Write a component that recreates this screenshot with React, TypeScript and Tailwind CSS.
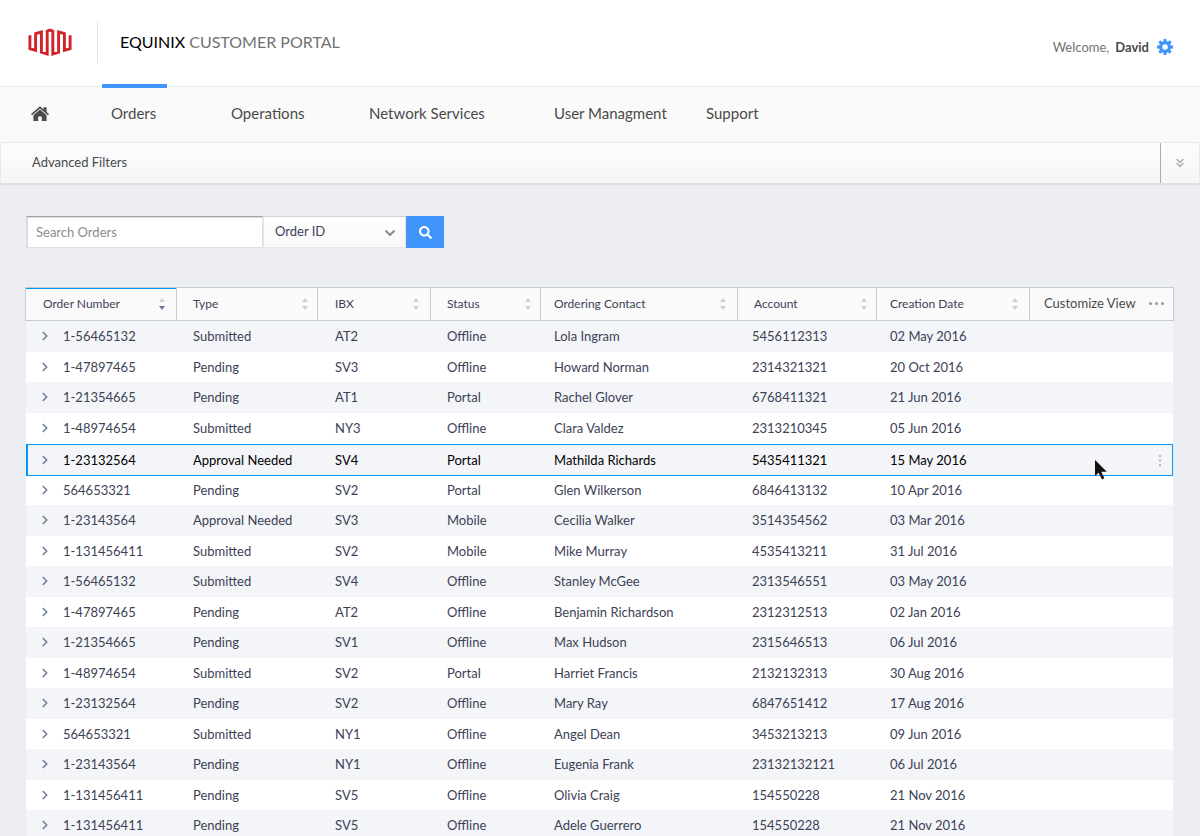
import React from 'react';
import { ChevronDown, ChevronRight, ChevronsDown } from 'lucide-react';
import { FaSearch } from 'react-icons/fa';

type Order = [string, string, string, string, string, string, string];

const ORDERS: Order[] = [
  ['1-56465132', 'Submitted', 'AT2', 'Offline', 'Lola Ingram', '5456112313', '02 May 2016'],
  ['1-47897465', 'Pending', 'SV3', 'Offline', 'Howard Norman', '2314321321', '20 Oct 2016'],
  ['1-21354665', 'Pending', 'AT1', 'Portal', 'Rachel Glover', '6768411321', '21 Jun 2016'],
  ['1-48974654', 'Submitted', 'NY3', 'Offline', 'Clara Valdez', '2313210345', '05 Jun 2016'],
  ['1-23132564', 'Approval Needed', 'SV4', 'Portal', 'Mathilda Richards', '5435411321', '15 May 2016'],
  ['564653321', 'Pending', 'SV2', 'Portal', 'Glen Wilkerson', '6846413132', '10 Apr 2016'],
  ['1-23143564', 'Approval Needed', 'SV3', 'Mobile', 'Cecilia Walker', '3514354562', '03 Mar 2016'],
  ['1-131456411', 'Submitted', 'SV2', 'Mobile', 'Mike Murray', '4535413211', '31 Jul 2016'],
  ['1-56465132', 'Submitted', 'SV4', 'Offline', 'Stanley McGee', '2313546551', '03 May 2016'],
  ['1-47897465', 'Pending', 'AT2', 'Offline', 'Benjamin Richardson', '2312312513', '02 Jan 2016'],
  ['1-21354665', 'Pending', 'SV1', 'Offline', 'Max Hudson', '2315646513', '06 Jul 2016'],
  ['1-48974654', 'Submitted', 'SV2', 'Portal', 'Harriet Francis', '2132132313', '30 Aug 2016'],
  ['1-23132564', 'Pending', 'SV2', 'Offline', 'Mary Ray', '6847651412', '17 Aug 2016'],
  ['564653321', 'Submitted', 'NY1', 'Offline', 'Angel Dean', '3453213213', '09 Jun 2016'],
  ['1-23143564', 'Pending', 'NY1', 'Offline', 'Eugenia Frank', '23132132121', '06 Jul 2016'],
  ['1-131456411', 'Pending', 'SV5', 'Offline', 'Olivia Craig', '154550228', '21 Nov 2016'],
  ['1-131456411', 'Pending', 'SV5', 'Offline', 'Adele Guerrero', '154550228', '21 Nov 2016'],
];

const SELECTED = 4;

const COLUMNS = [
  { label: 'Order Number', width: 'w-[152px]', head: 'pl-[17px]', cell: 'pl-3' },
  { label: 'Type', width: 'w-[141px]', head: 'pl-4', cell: 'pl-4' },
  { label: 'IBX', width: 'w-[113px]', head: 'pl-[17px]', cell: 'pl-[17px]' },
  { label: 'Status', width: 'w-[110px]', head: 'pl-4', cell: 'pl-4' },
  { label: 'Ordering Contact', width: 'w-[197px]', head: 'pl-[13px]', cell: 'pl-[13px]' },
  { label: 'Account', width: 'w-[139px]', head: 'pl-4', cell: 'pl-[14px]' },
  { label: 'Creation Date', width: 'w-[153px]', head: 'pl-[13px]', cell: 'pl-[13px]' },
];

const NAV = [
  { label: 'Orders', cell: 'w-[120px]' },
  { label: 'Operations', cell: 'w-[138px]' },
  { label: 'Network Services', cell: 'w-[185px]' },
  { label: 'User Managment', cell: 'w-[152px]' },
  { label: 'Support', cell: '' },
];

const GEAR_TEETH = [0, 45, 90, 135];

function Logo() {
  return (
    <svg viewBox="0 0 44 28" className="h-7 w-11" fill="none" stroke="#d2232a" strokeWidth="2.9" aria-label="Equinix">
      <path d="M1.9 7.2V20.6L7.6 22.3V5.6L13.4 4V24.2L19.2 26V3.2Q22 1.4 24.8 3.2V26L30.6 24.2V4L36.4 5.6V22.3L42.1 20.6V7.2" />
    </svg>
  );
}

function HomeIcon() {
  return (
    <svg viewBox="0 0 18 15" className="h-[15px] w-[18px]" fill="#4a4a4a" aria-hidden="true">
      <path d="M9 .2 12.6 3.3V1.2H15.6V5.9L18 8 17 9.2 9 2.4 1 9.2 0 8Z" />
      <path d="M9 3.6 15.6 9.2V15H10.8V10.4H7.2V15H2.4V9.2Z" />
    </svg>
  );
}

function GearIcon() {
  return (
    <svg viewBox="0 0 16 16" className="size-4" aria-hidden="true">
      <g fill="#3f95fb">
        {GEAR_TEETH.map((angle) => (
          <path
            key={angle}
            d="M6.6 0H9.4L9.7 3V6H6.3V3ZM6.6 16H9.4L9.7 13V10H6.3V13Z"
            transform={`rotate(${angle} 8 8)`}
          />
        ))}
      </g>
      <circle cx="8" cy="8" r="4.4" fill="#fff" stroke="#3f95fb" strokeWidth="3.2" />
    </svg>
  );
}

function SortIcon({ active }: { active: boolean }) {
  return (
    <svg viewBox="0 0 6 12" className="h-3 w-[6px] shrink-0" aria-hidden="true">
      <path d="M3 0 6 4H0Z" fill="#cfcfcf" />
      <path d="M0 8H6L3 12Z" fill={active ? '#6a7a98' : '#cfcfcf'} />
    </svg>
  );
}

function Pointer() {
  return (
    <svg viewBox="0 0 12 20" className="absolute left-[65px] top-4 z-10 h-5 w-3" aria-hidden="true">
      <path d="M0 0V16L3.6 12.7 7 19.4 9.4 18.2 6.2 11.8H11.8Z" fill="#111" />
    </svg>
  );
}

function rowHeight(row: number) {
  if (row === SELECTED) return 'h-8';
  if (row === SELECTED + 1) return 'h-[29px]';
  return row % 2 === 0 || row === 3 ? 'h-[31px]' : 'h-[30px]';
}

export default function App() {
  return (
    <div className="min-h-screen bg-[#edeef2] font-['Lato','Liberation_Sans',sans-serif] text-[#3c4256]">
      <header className="flex h-[86px] items-center bg-white pb-0.5 pl-7 pr-[27px]">
        <Logo />
        <span className="ml-[25px] h-[42px] w-px bg-[#e4e4ec]" />
        <h1 className="ml-[22px] text-base leading-5 text-[#727272]">
          <span className="text-black">EQUINIX</span> CUSTOMER PORTAL
        </h1>
        <div className="ml-auto flex items-center pt-2.5 text-[13px] leading-5 text-[#4a4a4a]">
          <span className="text-[#737373]">Welcome,</span>
          <b className="ml-1.5">David</b>
          <button aria-label="Settings" className="ml-2">
            <GearIcon />
          </button>
        </div>
      </header>

      <nav className="flex h-14 items-center border-t border-[#ececec] bg-[#fafafa] pb-[3px] pl-[31px] text-[15px] text-[#4a4a4a]">
        <a href="#home" aria-label="Home" className="mr-[62px]">
          <HomeIcon />
        </a>
        {NAV.map((item, i) => (
          <div key={item.label} className={`relative flex h-full items-center ${item.cell}`}>
            {i === 0 && <span className="absolute -left-[9px] -top-[3px] h-1 w-[65px] bg-[#3f95fb]" />}
            <a href={`#${item.label}`}>{item.label}</a>
          </div>
        ))}
      </nav>

      <section className="flex h-[41px] border border-b-0 border-[#e8e8e8] bg-linear-to-b from-[#fcfdff] to-[#f5f5f5] shadow-[0_2px_1px_#dfe0e3]">
        <button className="flex-1 pl-[31px] text-left text-[13px] text-[#4a4a4a]">Advanced Filters</button>
        <button aria-label="Expand filters" className="grid w-[39px] place-items-center border-l border-[#aaaaae]">
          <ChevronsDown className="size-3.5 text-[#aaaaaa]" strokeWidth={2.5} />
        </button>
      </section>

      <main className="pl-[25px] pr-[26px] pt-[33px]">
        <form className="ml-px flex h-8" onSubmit={(e) => e.preventDefault()}>
          <input
            aria-label="Search Orders"
            placeholder="Search Orders"
            className="w-[237px] border border-[#dedede] border-t-[#a5a5a8] bg-white px-[9px] pt-0.5 text-[13px] shadow-[inset_1px_1px_1px_#d8d8d8] outline-none placeholder:text-[#8c8c8c]"
          />
          <div className="relative w-[143px]">
            <select
              aria-label="Search field"
              className="h-full w-full appearance-none border border-[#e6e6e6] border-t-[#cfcfd2] bg-linear-to-b from-white to-[#f8f8f8] px-[11px] text-[13px]"
            >
              <option>Order ID</option>
            </select>
            <ChevronDown className="pointer-events-none absolute right-2 top-[9px] size-4 text-[#8c8c8c]" strokeWidth={3} />
          </div>
          <button aria-label="Search" className="grid w-[38px] place-items-center bg-[#3f95fb] text-white">
            <FaSearch className="size-[13px]" />
          </button>
        </form>

        <table className="mt-[39px] w-full table-fixed border-separate border-spacing-0 text-left text-[13px] leading-5">
          <thead className="text-xs">
            <tr className="h-[34px]">
              {COLUMNS.map((col, i) => (
                <th
                  key={col.label}
                  className={`border-y border-r border-[#c7cbd8] bg-[#fafafa] p-0 font-normal ${col.width} ${col.head} ${
                    i === 0 ? 'border-l shadow-[inset_0_1px_#0096fa]' : ''
                  }`}
                >
                  <button className={`flex w-full items-center justify-between ${i % 2 === 0 ? 'pr-[11px]' : 'pr-[9px]'}`}>
                    {col.label}
                    <SortIcon active={i === 0} />
                  </button>
                </th>
              ))}
              <th className="w-[144px] border-y border-r border-[#c7cbd8] bg-[#fafafa] p-0 pl-[14px] pr-[9px] text-[13px] font-normal text-[#4a4a4a]">
                <button className="flex w-full items-center justify-between">
                  Customize View
                  <svg viewBox="0 0 15 3" className="h-[3px] w-[15px]" fill="#999" aria-hidden="true">
                    <circle cx="1.5" cy="1.5" r="1.5" />
                    <circle cx="7.5" cy="1.5" r="1.5" />
                    <circle cx="13.5" cy="1.5" r="1.5" />
                  </svg>
                </button>
              </th>
            </tr>
          </thead>
          <tbody>
            {ORDERS.map((order, row) => {
              const selected = row === SELECTED;
              const fill = row % 2 === 0 ? 'bg-[#f4f5f8]' : 'bg-white';
              const line = 'shadow-[inset_0_1px_#0096fa,inset_0_-1px_#0096fa]';
              const lineStart = 'shadow-[inset_2px_1px_#0096fa,inset_0_-1px_#0096fa]';
              const lineEnd = 'shadow-[inset_-1px_1px_#0096fa,inset_0_-1px_#0096fa]';
              return (
                <tr key={row} className={`${rowHeight(row)} ${selected ? 'text-black' : ''}`}>
                  {order.map((value, i) => (
                    <td
                      key={i}
                      className={`p-0 pb-px ${fill} ${COLUMNS[i].cell} ${
                        i === 0 ? 'border-l border-transparent bg-clip-padding' : ''
                      } ${selected ? (i === 0 ? lineStart : line) : ''}`}
                    >
                      {i === 0 ? (
                        <span className="flex items-center">
                          <button aria-label={`Expand order ${value}`} className="mr-[11px]">
                            <ChevronRight className="size-3.5 text-[#74829d]" strokeWidth={3} />
                          </button>
                          {value}
                        </span>
                      ) : (
                        value
                      )}
                    </td>
                  ))}
                  <td
                    className={`relative border-r border-transparent bg-clip-padding p-0 ${fill} ${selected ? lineEnd : ''}`}
                  >
                    {selected && (
                      <>
                        <Pointer />
                        <button aria-label="Row actions" className="ml-auto mr-3 block">
                          <svg viewBox="0 0 2 11" className="h-[11px] w-[2px]" fill="#b9b9b9" aria-hidden="true">
                            <path d="M0 0h2v2H0zM0 4.5h2v2H0zM0 9h2v2H0z" />
                          </svg>
                        </button>
                      </>
                    )}
                  </td>
                </tr>
              );
            })}
          </tbody>
        </table>
      </main>
    </div>
  );
}
